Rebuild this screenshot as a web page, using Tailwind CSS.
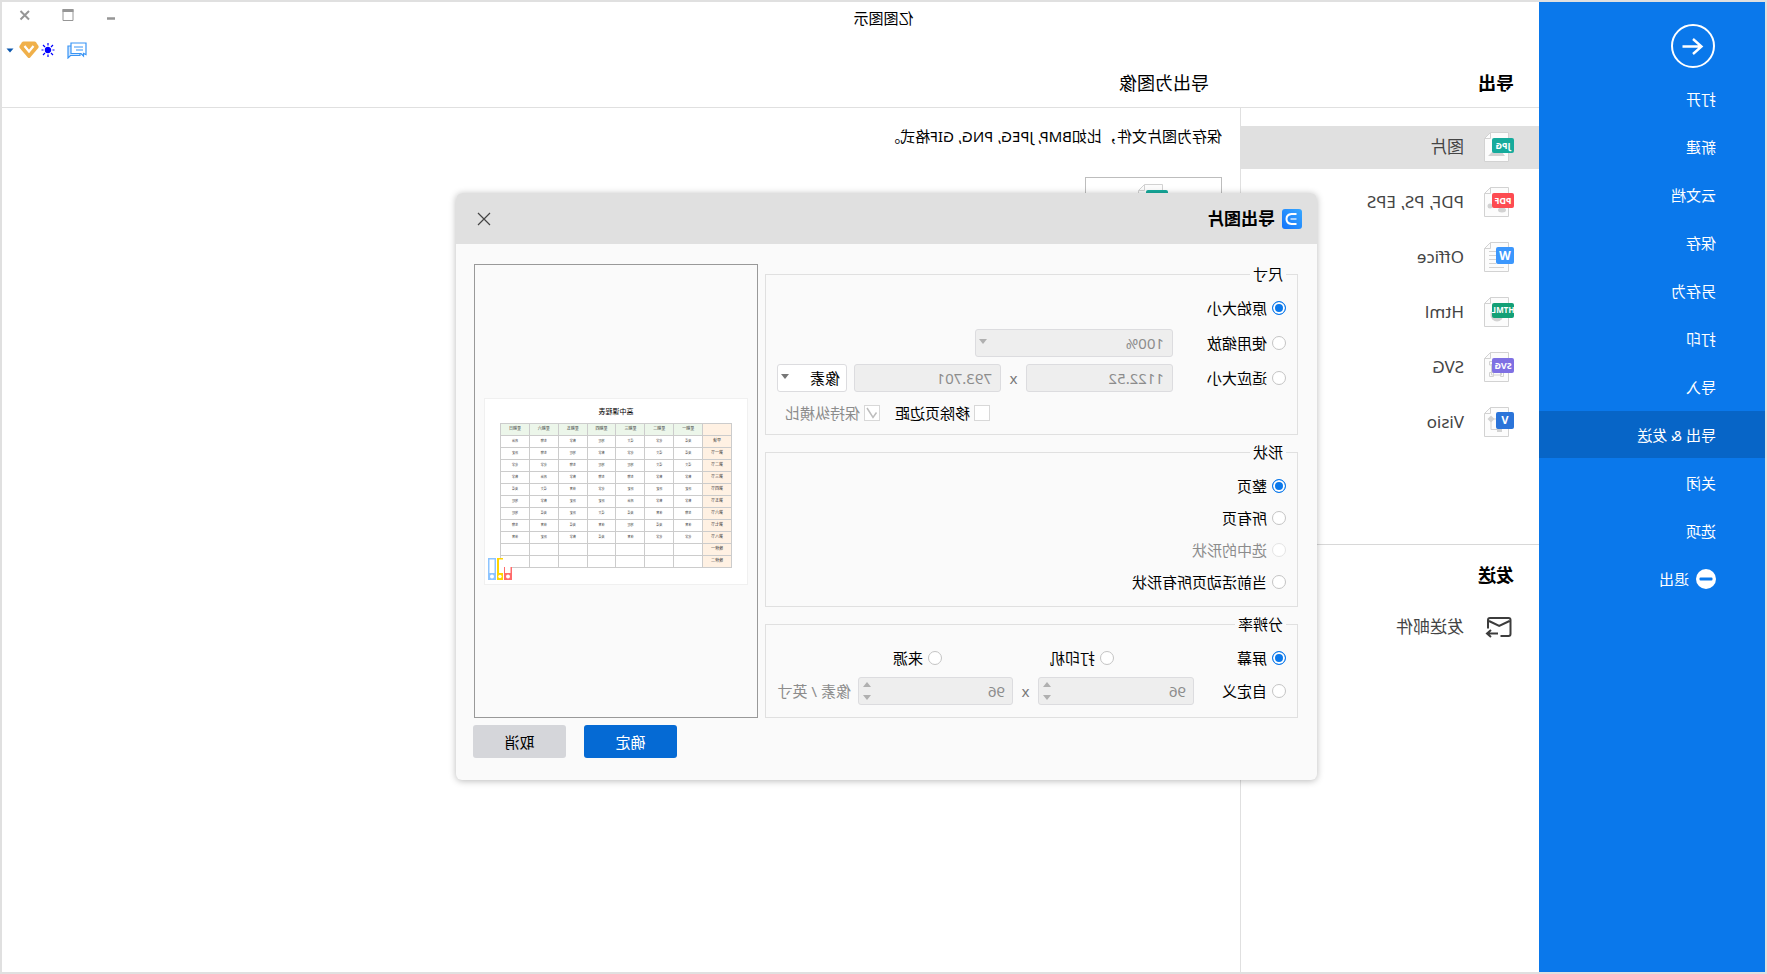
<!DOCTYPE html>
<html lang="zh-CN">
<head>
<meta charset="utf-8">
<title>亿图图示</title>
<script src="https://cdn.jsdelivr.net/npm/@tailwindcss/browser@4"></script>
</head>
<body class="bg-white">
<svg class="hidden">
  <symbol id="doc" viewBox="0 0 30 30">
    <path d="M5.500 .5H23.500L29.500 6.500V29.500H5.500Z" fill="#fcfcfc" stroke="#d2d2d2"/>
    <path d="M23.500 .5V6.500H29.500" fill="none" stroke="#d2d2d2"/>
  </symbol>
</svg>
<div class="relative flex h-screen -scale-x-100 overflow-hidden border-2 border-[#e0e0e0] bg-white font-['Noto_Sans','Noto_Sans_CJK_SC',sans-serif] text-[15px] leading-[22px] text-black">

  <nav class="flex w-[226px] shrink-0 flex-col bg-[#0a78eb] text-white">
    <button aria-label="返回" class="mt-[22px] ml-[50px] h-11 w-11">
      <svg viewBox="0 0 44 44" class="h-11 w-11" fill="none" stroke="#fff" stroke-width="2"><circle cx="22" cy="22" r="21"/><path d="M32.500 22.500H13M22 15L13.500 22.500L22 30" stroke-width="2.400"/></svg>
    </button>
    <div class="mt-[7px] flex flex-col gap-px">
      <a href="#" class="flex h-[47px] items-center pl-[49px]">打开</a>
      <a href="#" class="flex h-[47px] items-center pl-[49px]">新建</a>
      <a href="#" class="flex h-[47px] items-center pl-[49px]">云文档</a>
      <a href="#" class="flex h-[47px] items-center pl-[49px]">保存</a>
      <a href="#" class="flex h-[47px] items-center pl-[49px]">另存为</a>
      <a href="#" class="flex h-[47px] items-center pl-[49px]">打印</a>
      <a href="#" class="flex h-[47px] items-center pl-[49px]">导入</a>
      <a href="#" class="flex h-[47px] items-center bg-[#0765c7] pl-[49px]">导出 &amp; 发送</a>
      <a href="#" class="flex h-[47px] items-center pl-[49px]">关闭</a>
      <a href="#" class="flex h-[47px] items-center pl-[49px]">选项</a>
      <a href="#" class="flex h-[47px] items-center gap-[7px] pl-[49px]">
        <svg viewBox="0 0 20 20" class="h-5 w-5"><circle cx="10" cy="10" r="10" fill="#fff"/><rect x="3.500" y="8.500" width="13" height="3" rx="1" fill="#0a78eb"/></svg>退出</a>
    </div>
  </nav>

  <main class="flex min-w-0 flex-1 flex-col">
    <header class="flex h-[106px] shrink-0 items-end border-b border-[#e0e0e0]">
      <h1 class="w-[298px] pb-3 pl-[25px] text-lg leading-6 font-bold">导出</h1>
      <h2 class="pb-3 pl-8 text-lg leading-6">导出为图像</h2>
      <div class="ml-auto flex flex-col items-end gap-5 self-start pt-[7px] pr-1">
        <div class="flex gap-[31px] pr-[13px] text-[#969696]">
          <button aria-label="最小化"><svg viewBox="0 0 12 12" class="h-3 w-3"><path d="M2 9.500h8" stroke="currentColor" stroke-width="2.500"/></svg></button>
          <button aria-label="最大化"><svg viewBox="0 0 12 12" class="h-3 w-3" fill="none" stroke="currentColor"><path d="M1 .5V11.500H11V.5"/><path d="M.5 1.500H11.500" stroke-width="3"/></svg></button>
          <button aria-label="关闭窗口"><svg viewBox="0 0 12 12" class="h-3 w-3"><path d="M2 2L10.500 10.500M10.500 2L2 10.500" stroke="currentColor" stroke-width="2"/></svg></button>
        </div>
        <div class="flex items-center">
          <button aria-label="消息" class="mr-3"><svg viewBox="0 0 20 17" class="h-[17px] w-5" fill="#fff" stroke="#3a95f5" stroke-width="1.200"><path d="M15 4H19V16L16.500 13.500H7V10" fill="#cfe6ff"/><path d="M1 1H16V11.500H6L3.500 14V11.500L1 12.500Z"/><path d="M4 5H13M4 8H11" fill="none"/></svg></button>
          <button aria-label="主题"><svg viewBox="0 0 14 14" class="h-3.5 w-3.5" stroke="#00f" stroke-width="1.200"><circle cx="7" cy="7" r="2.600" fill="#00f"/><path d="M7 0V2.500M7 11.500V14M.5 7H2.500M11.500 7H13.500M2 2L4 4M10 10L12 12M12 2L10 4M4 10L2 12"/></svg></button>
          <button aria-label="会员" class="ml-[2px]"><svg viewBox="0 0 20 18" class="h-[18px] w-5"><path d="M4.500 .5H15.500Q16.500 .5 17.200 1.500L19.500 5Q20 6 19.300 7L11.200 16.500Q10 17.700 8.800 16.500L.7 7Q0 6 .5 5L2.800 1.500Q3.500 .5 4.500 .5Z" fill="#f0b04a"/><path d="M5.500 5L10 10.500L14.500 5" fill="none" stroke="#fff" stroke-width="2.200"/></svg></button>
          <button aria-label="更多" class="ml-[5px]"><svg viewBox="0 0 8 5" class="h-[5px] w-2"><path d="M.5 .5H7.500L4 4.500Z" fill="#0b57ae"/></svg></button>
        </div>
      </div>
    </header>

    <div class="flex min-h-0 flex-1">
      <aside class="w-[299px] shrink-0 border-r border-[#e0e0e0] pt-[18px] text-[17px] leading-6 text-[#444]">
        <div class="flex flex-col gap-3">
          <a href="#" class="flex h-[43px] items-center gap-5 bg-[#e0e0e0] pb-px pl-[25px]"><svg viewBox="0 0 30 30" class="h-[30px] w-[30px]"><use href="#doc"/><path d="M9 24L15 16L19 21L21 19L26 24Z" fill="#d2d2d2"/><rect y="6" width="22" height="15" rx="2" fill="#16ab9c"/><text x="11" y="17" text-anchor="middle" font-size="9" font-weight="700" fill="#fff">JPG</text></svg>图片</a>
          <a href="#" class="flex h-[43px] items-center gap-5 pb-px pl-[25px]"><svg viewBox="0 0 30 30" class="h-[30px] w-[30px]"><use href="#doc"/><ellipse cx="12" cy="23" rx="4" ry="2.500" fill="#d2d2d2"/><circle cx="24" cy="19" r="2.500" fill="#d2d2d2"/><rect y="6" width="22" height="15" rx="2" fill="#fd4b51"/><text x="11" y="17" text-anchor="middle" font-size="9" font-weight="700" fill="#fff">PDF</text></svg>PDF, PS, EPS</a>
          <a href="#" class="flex h-[43px] items-center gap-5 pb-px pl-[25px]"><svg viewBox="0 0 30 30" class="h-[30px] w-[30px]"><use href="#doc"/><path d="M18 9.500H25M18 13.500H25M18 17.500H25M18 21.500H25M10 25.500H25" stroke="#d2d2d2"/><rect y="5" width="18" height="17" rx="2" fill="#3b97fd"/><text x="9" y="18" text-anchor="middle" font-size="12" font-weight="700" fill="#fff">W</text></svg>Office</a>
          <a href="#" class="flex h-[43px] items-center gap-5 pb-px pl-[25px]"><svg viewBox="0 0 30 30" class="h-[30px] w-[30px]"><use href="#doc"/><circle cx="17" cy="18" r="6.500" fill="#d2d2d2"/><rect y="6" width="22" height="15" rx="2" fill="#13a076"/><text x="11" y="16" text-anchor="middle" font-size="8" font-weight="700" fill="#fff">HTML</text></svg>Html</a>
          <a href="#" class="flex h-[43px] items-center gap-5 pb-px pl-[25px]"><svg viewBox="0 0 30 30" class="h-[30px] w-[30px]"><use href="#doc"/><path d="M12.500 12V23H22.500V12M10.500 20.500H13.500V24.500H10.500ZM20.500 20.500H24.500V24.500H20.500ZM20.500 9.500H24.500V13H20.500Z" fill="none" stroke="#d2d2d2"/><rect y="6" width="22" height="15" rx="2" fill="#7f70e3"/><text x="11" y="17" text-anchor="middle" font-size="9" font-weight="700" fill="#fff">SVG</text></svg>SVG</a>
          <a href="#" class="flex h-[43px] items-center gap-5 pb-px pl-[25px]"><svg viewBox="0 0 30 30" class="h-[30px] w-[30px]"><use href="#doc"/><path d="M18 12H23V22.500H15" fill="none" stroke="#d2d2d2"/><path d="M23 8.500L26.500 12L23 15.500L19.500 12Z" fill="#d2d2d2"/><rect x="12" y="21" width="5" height="4" fill="#d2d2d2"/><rect y="5" width="18" height="17" rx="2" fill="#2b74d9"/><text x="9" y="17" text-anchor="middle" font-size="11" font-weight="700" fill="#fff">V</text></svg>Visio</a>
        </div>
        <hr class="mt-[100px] border-[#d8d8d8]">
        <h2 class="mt-[18px] pl-[25px] text-lg leading-6 font-bold text-black">发送</h2>
        <a href="#" class="mt-[19px] flex h-[43px] items-center gap-5 pb-px pl-[25px]"><svg viewBox="0 0 30 30" class="h-[30px] w-[30px]" fill="none" stroke="#3c3c3c" stroke-width="2"><path d="M13.500 24H5.500Q3.500 24 3.500 22V8Q3.500 6 5.500 6H24Q26 6 26 8V16.500M4.500 9L14.800 14L25 9M16 21.500H26.500M23 18L27 21.500L23 25"/></svg>发送邮件</a>
      </aside>

      <section class="min-w-0 flex-1 pt-4 pl-[18px]">
        <p class="leading-6">保存为图片文件，比如BMP, JPEG, PNG, GIF格式。</p>
        <button aria-label="导出为图片" class="mt-[29px] flex h-[120px] w-[137px] justify-center border border-[#bdbdbd] pt-[6px]"><svg viewBox="0 0 30 30" class="h-[30px] w-[30px]"><use href="#doc"/><rect y="6" width="22" height="15" rx="2" fill="#16ab9c"/></svg></button>
      </section>
    </div>
  </main>

  <div class="pointer-events-none absolute inset-x-0 top-[5px] text-center">亿图图示</div>

  <div class="absolute inset-0 flex items-center justify-center pr-[6px] pb-px">
    <div role="dialog" aria-labelledby="dlg-title" class="w-[861px] overflow-hidden rounded-md bg-[#fafafa] shadow-[0_1px_7px_rgba(0,0,0,0.28)]">
      <div class="flex h-[51px] items-center bg-[#e0e0e0] pr-[21px] pl-[15px]">
        <svg viewBox="0 0 20 20" class="h-5 w-5"><defs><linearGradient id="lg" x1="0" y1="0" x2="1" y2="1"><stop offset="0" stop-color="#38a8ff"/><stop offset="1" stop-color="#1273fb"/></linearGradient></defs><rect width="20" height="20" rx="3" fill="url(#lg)"/><path d="M5.500 5H10.500Q15.500 5.500 15.500 10Q15.500 14.500 10.500 15H5.500" fill="none" stroke="#fff" stroke-width="2"/><path d="M5.500 10H11.500" stroke="#a9d4ff" stroke-width="2"/></svg>
        <h2 id="dlg-title" class="ml-[7px] text-[17px] leading-6 font-bold">导出图片</h2>
        <button aria-label="关闭" class="ml-auto"><svg viewBox="0 0 14 14" class="h-3.5 w-3.5"><path d="M1 1L13 13M13 1L1 13" stroke="#444" stroke-width="1.200"/></svg></button>
      </div>

      <div class="flex gap-[7px] pt-[19px] pr-[18px] pl-[19px]">
        <div class="flex min-w-0 flex-1 flex-col gap-[6px]">
          <fieldset class="border border-[#e0e0e0] pt-[5px] pb-1 pl-[11px]">
            <legend class="px-[3px]">尺寸</legend>
            <div class="flex h-[35px] items-center">
              <label class="flex items-center gap-[5px]"><input type="radio" name="size" checked class="h-3.5 w-3.5 appearance-none rounded-full border border-[#c4c4c4] bg-white checked:border-[#0a78eb] checked:bg-[#0a78eb] checked:shadow-[inset_0_0_0_2px_#fff]">原始大小</label>
            </div>
            <div class="flex h-[35px] items-center">
              <label class="flex w-[113px] items-center gap-[5px]"><input type="radio" name="size" class="h-3.5 w-3.5 appearance-none rounded-full border border-[#c4c4c4] bg-white">使用缩放</label>
              <div class="relative">
                <select disabled aria-label="缩放比例" class="block h-7 w-[198px] appearance-none rounded-[3px] border border-[#dcdcdf] bg-[#eee] pl-2 text-[#8c8c8c] opacity-100"><option>100%</option></select>
                <svg viewBox="0 0 8 5" class="absolute top-[10px] right-1 h-[5px] w-2"><path d="M0 0H8L4 5Z" fill="#b0b0b0"/></svg>
              </div>
            </div>
            <div class="flex h-[35px] items-center">
              <label class="flex w-[113px] items-center gap-[5px]"><input type="radio" name="size" class="h-3.5 w-3.5 appearance-none rounded-full border border-[#c4c4c4] bg-white">适应大小</label>
              <input disabled aria-label="宽度" value="1122.52" class="h-7 w-[147px] rounded-[3px] border border-[#dcdcdf] bg-[#eee] px-2 text-[#8c8c8c]">
              <span class="w-[25px] text-center text-[#777]">x</span>
              <input disabled aria-label="高度" value="793.701" class="h-7 w-[147px] rounded-[3px] border border-[#dcdcdf] bg-[#eee] px-2 text-[#8c8c8c]">
              <div class="relative ml-[7px]">
                <select aria-label="单位" class="block h-7 w-[70px] appearance-none rounded-[3px] border border-[#dcdcdf] bg-white pl-[6px]"><option>像素</option></select>
                <svg viewBox="0 0 8 5" class="absolute top-[10px] right-1 h-[5px] w-2"><path d="M0 0H8L4 5Z" fill="#777"/></svg>
              </div>
            </div>
            <div class="flex h-[35px] items-center gap-[15px] pl-[296px]">
              <label class="flex items-center gap-1"><input type="checkbox" class="h-4 w-4 appearance-none border border-[#d8d8d8] bg-white">移除页边距</label>
              <label class="flex items-center gap-1 text-[#8c8c8c]"><span class="relative"><input type="checkbox" checked disabled class="block h-4 w-4 appearance-none border border-[#d8d8d8] bg-white"><svg viewBox="0 0 16 16" class="absolute inset-0 h-4 w-4" fill="none" stroke="#bdbdbd" stroke-width="1.500"><path d="M3.500 7.500L7 12.500L13 3"/></svg></span>保持纵横比</label>
            </div>
          </fieldset>

          <fieldset class="border border-[#e0e0e0] pt-[7px] pb-2 pl-[11px]">
            <legend class="px-[3px]">形状</legend>
            <div class="flex h-8 items-center"><label class="flex items-center gap-[5px]"><input type="radio" name="shape" checked class="h-3.5 w-3.5 appearance-none rounded-full border border-[#c4c4c4] bg-white checked:border-[#0a78eb] checked:bg-[#0a78eb] checked:shadow-[inset_0_0_0_2px_#fff]">整页</label></div>
            <div class="flex h-8 items-center"><label class="flex items-center gap-[5px]"><input type="radio" name="shape" class="h-3.5 w-3.5 appearance-none rounded-full border border-[#c4c4c4] bg-white">所有页</label></div>
            <div class="flex h-8 items-center"><label class="flex items-center gap-[5px] text-[#8c8c8c]"><input type="radio" name="shape" disabled class="h-3.5 w-3.5 appearance-none rounded-full border border-[#e4e4e4] bg-white">选中的形状</label></div>
            <div class="flex h-8 items-center"><label class="flex items-center gap-[5px]"><input type="radio" name="shape" class="h-3.5 w-3.5 appearance-none rounded-full border border-[#c4c4c4] bg-white">当前活动页所有形状</label></div>
          </fieldset>

          <fieldset class="border border-[#e0e0e0] pt-[6px] pb-[10px] pl-[11px]">
            <legend class="px-[3px]">分辨率</legend>
            <div class="flex h-[33px] items-center">
              <label class="flex w-[172px] items-center gap-[5px]"><input type="radio" name="dpi" checked class="h-3.5 w-3.5 appearance-none rounded-full border border-[#c4c4c4] bg-white checked:border-[#0a78eb] checked:bg-[#0a78eb] checked:shadow-[inset_0_0_0_2px_#fff]">屏幕</label>
              <label class="flex w-[172px] items-center gap-[5px]"><input type="radio" name="dpi" class="h-3.5 w-3.5 appearance-none rounded-full border border-[#c4c4c4] bg-white">打印机</label>
              <label class="flex items-center gap-[5px]"><input type="radio" name="dpi" class="h-3.5 w-3.5 appearance-none rounded-full border border-[#c4c4c4] bg-white">来源</label>
            </div>
            <div class="flex h-[33px] items-center pt-px">
              <label class="flex w-[92px] items-center gap-[5px]"><input type="radio" name="dpi" class="h-3.5 w-3.5 appearance-none rounded-full border border-[#c4c4c4] bg-white">自定义</label>
              <div class="relative">
                <input disabled aria-label="水平分辨率" value="96" class="block h-7 w-[156px] rounded-[3px] border border-[#dcdcdf] bg-[#eee] px-[7px] text-[#8c8c8c]">
                <svg viewBox="0 0 8 18" class="absolute top-[5px] right-[5px] h-[18px] w-2" fill="#b0b0b0"><path d="M0 5H8L4 0ZM0 13H8L4 18Z"/></svg>
              </div>
              <span class="w-[25px] text-center text-[#777]">x</span>
              <div class="relative">
                <input disabled aria-label="垂直分辨率" value="96" class="block h-7 w-[155px] rounded-[3px] border border-[#dcdcdf] bg-[#eee] px-[7px] text-[#8c8c8c]">
                <svg viewBox="0 0 8 18" class="absolute top-[5px] right-[5px] h-[18px] w-2" fill="#b0b0b0"><path d="M0 5H8L4 0ZM0 13H8L4 18Z"/></svg>
              </div>
              <span class="ml-[7px] whitespace-nowrap text-[#8c8c8c]">像素 / 英寸</span>
            </div>
          </fieldset>
        </div>

        <div class="mt-px flex w-[284px] shrink-0 items-center justify-center border border-[#999]">
          <div class="relative h-[187px] w-[264px] border border-[#f0f0f0] bg-white">
            <div class="pt-2 text-center text-[7px] leading-[10px]">高中课程表</div>
            <table class="mx-auto mt-[6px] w-[232px] table-fixed border-collapse text-center text-[3px] leading-[4px] text-[#333] [&_td]:border [&_td]:border-[#ccc] [&_td]:p-0 [&_th]:border [&_th]:border-[#ccc] [&_th]:p-0 [&_th]:text-[4px] [&_th]:font-normal [&_tr]:h-3">
              <thead class="bg-[#ecf6ea]"><tr><th class="bg-[#fff1e3]"></th><th>星期一</th><th>星期二</th><th>星期三</th><th>星期四</th><th>星期五</th><th>星期六</th><th>星期日</th></tr></thead>
              <tbody class="[&_th]:bg-[#fff1e3]">
                <tr><th>早读</th><td>英语</td><td>化学</td><td>语文</td><td>地理</td><td>数学</td><td>生物</td><td>政治</td></tr>
                <tr><th>第一节</th><td>英语</td><td>语文</td><td>化学</td><td>数学</td><td>地理</td><td>生物</td><td>历史</td></tr>
                <tr><th>第二节</th><td>语文</td><td>语文</td><td>地理</td><td>地理</td><td>生物</td><td>化学</td><td>化学</td></tr>
                <tr><th>第三节</th><td>数学</td><td>数学</td><td>生物</td><td>生物</td><td>数学</td><td>政治</td><td>数学</td></tr>
                <tr><th>第四节</th><td>历史</td><td>历史</td><td>历史</td><td>化学</td><td>体育</td><td>语文</td><td>英语</td></tr>
                <tr><th>第五节</th><td>数学</td><td>数学</td><td>政治</td><td>历史</td><td>历史</td><td>数学</td><td>地理</td></tr>
                <tr><th>第六节</th><td>生物</td><td>体育</td><td>英语</td><td>语文</td><td>历史</td><td>英语</td><td>地理</td></tr>
                <tr><th>第七节</th><td>体育</td><td>英语</td><td>地理</td><td>体育</td><td>英语</td><td>体育</td><td>生物</td></tr>
                <tr><th>第八节</th><td>化学</td><td>化学</td><td>体育</td><td>英语</td><td>数学</td><td>历史</td><td>体育</td></tr>
                <tr><th>晚修一</th><td></td><td></td><td></td><td></td><td></td><td></td><td></td></tr>
                <tr><th>晚修二</th><td></td><td></td><td></td><td></td><td></td><td></td><td></td></tr>
              </tbody>
            </table>
            <svg viewBox="0 0 24 22" class="absolute right-[3px] bottom-1 h-[22px] w-6" fill="#fff"><rect x="16" y="0" width="8" height="22" fill="#8cc4ff"/><path d="M17.500 1.500H22.500V15H17.500Z"/><path d="M9 0H15V22H9Z" fill="#ffd400"/><path d="M8 1.500H13V15H8Z"/><path d="M0 9H8V22H0Z" fill="#ff6b6b"/><path d="M1.500 8H7V15H1.500Z"/><circle cx="4" cy="18.500" r="2"/><circle cx="12" cy="18.500" r="1.700"/><circle cx="20" cy="18.500" r="2"/></svg>
          </div>
        </div>
      </div>

      <div class="flex justify-end gap-[18px] pt-[7px] pr-[17px] pb-[22px]">
        <button class="h-[33px] w-[93px] rounded-[3px] bg-[#056ad4] text-white">确定</button>
        <button class="h-[33px] w-[93px] rounded-[3px] bg-[#d5d6da]">取消</button>
      </div>
    </div>
  </div>
</div>
</body>
</html>
